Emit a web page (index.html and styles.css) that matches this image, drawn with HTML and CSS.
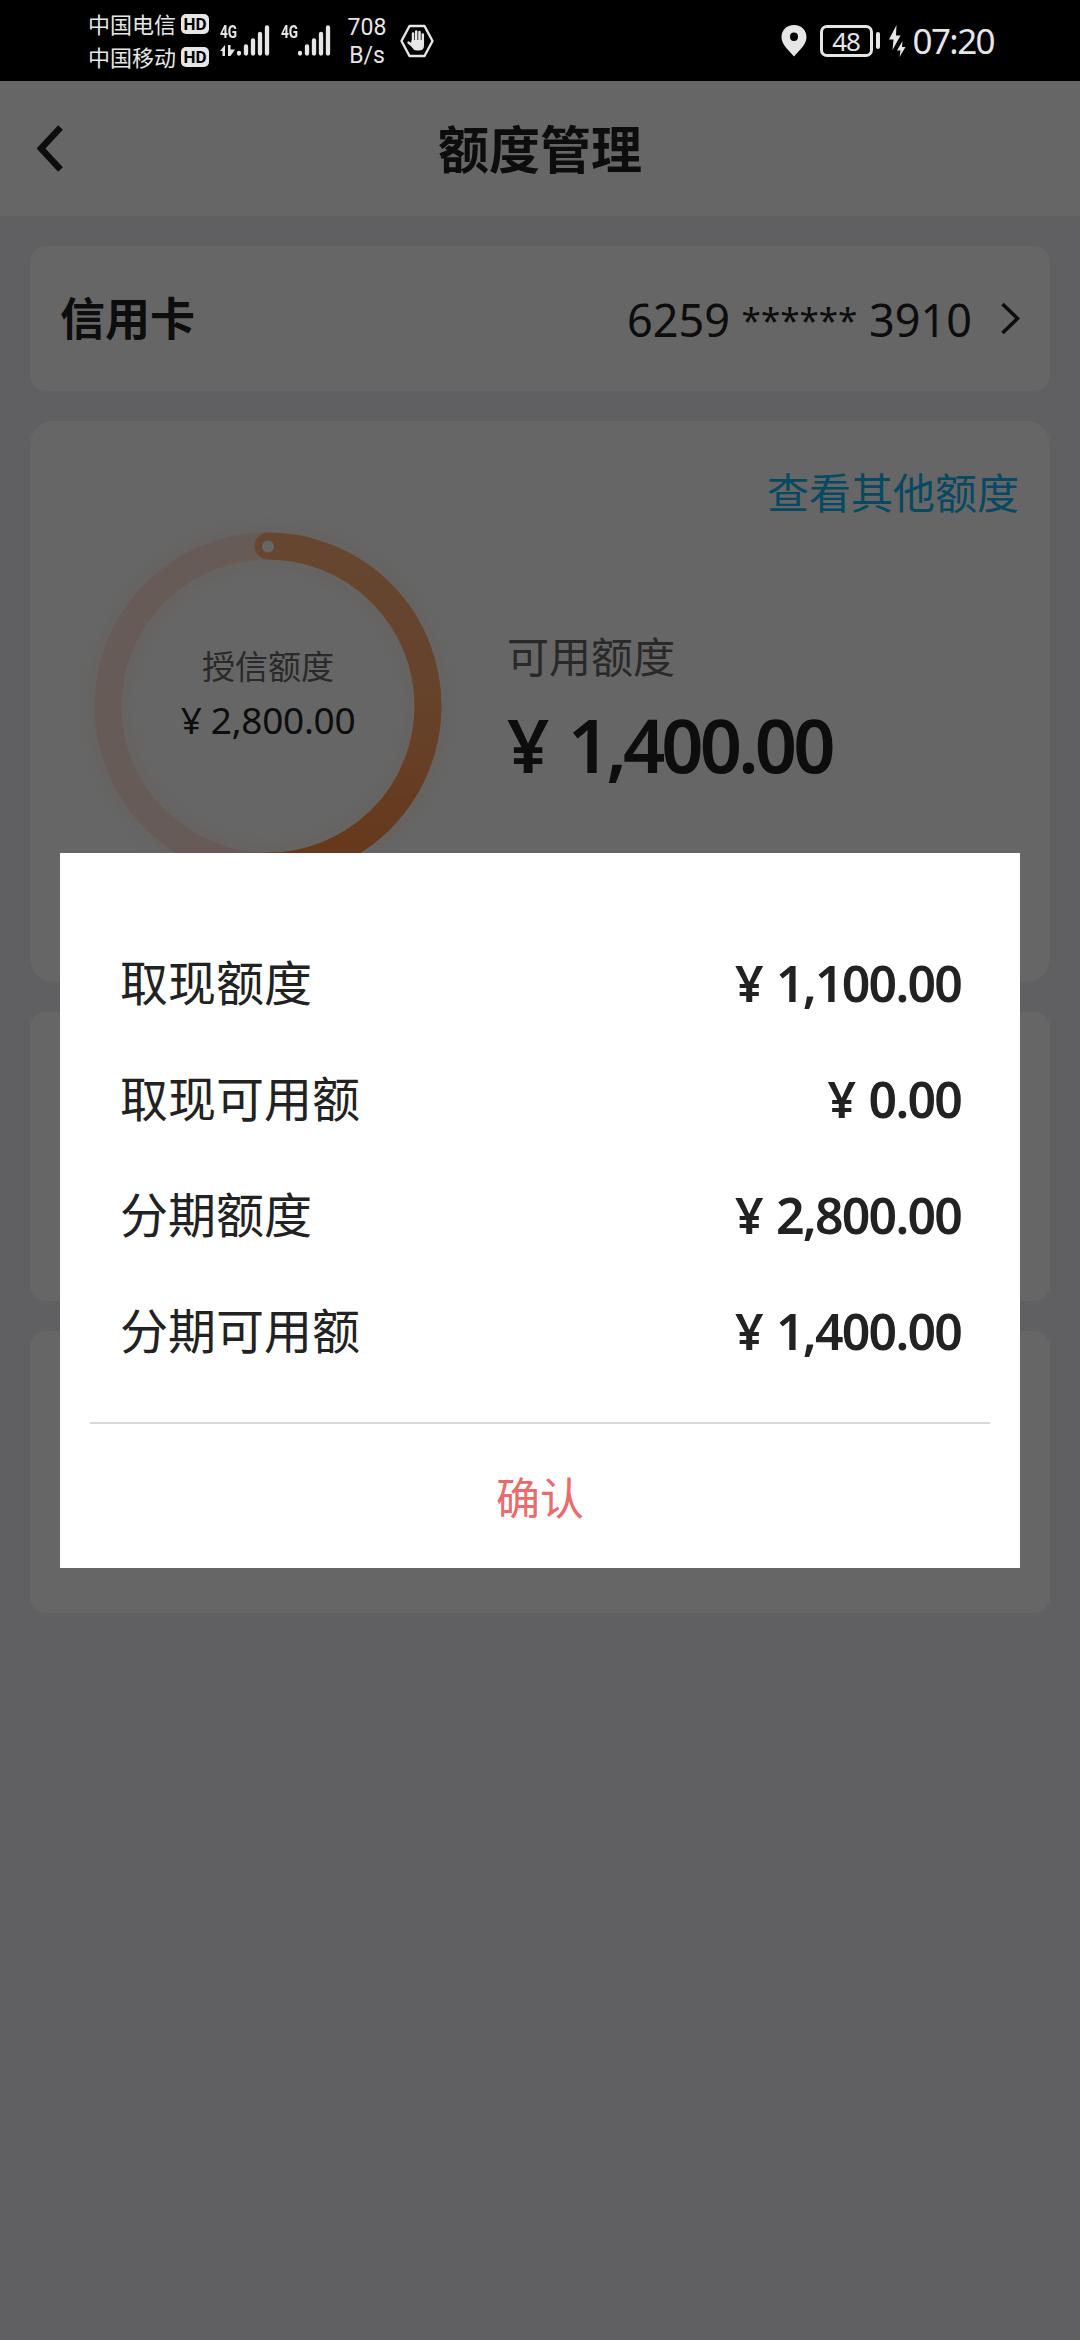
FILE: index.html
```html
<!DOCTYPE html>
<html lang="zh-CN">
<head>
<meta charset="utf-8">
<title>额度管理</title>
<link rel="stylesheet" href="styles.css">
</head>
<body>
<div class="screen">
  <header class="status">
    <div class="carriers">
      <div class="carrier">中国电信<span class="hd">HD</span></div>
      <div class="carrier">中国移动<span class="hd">HD</span></div>
    </div>
    <div class="signal">
      <span class="net">4G</span>
      <svg class="bars" width="51" height="32" viewBox="0 0 51 32">
        <g fill="none" stroke="#e6e6e6" stroke-width="4.300" stroke-linecap="round">
          <path d="M19 28.500v-.5M26 28.500v-7M33 28.500v-13M40 28.500v-19.500M47 28.500v-26"/>
        </g>
        <path class="fill" d="M0 26l5-6v11H2.500v-5zM8 20h2.500v4.500H15L10.500 31H8z"/>
      </svg>
    </div>
    <div class="signal second">
      <span class="net">4G</span>
      <svg class="bars" width="51" height="32" viewBox="0 0 51 32">
        <g fill="none" stroke="#e6e6e6" stroke-width="4.300" stroke-linecap="round">
          <path d="M19 28.500v-.5M26 28.500v-7M33 28.500v-13M40 28.500v-19.500M47 28.500v-26"/>
        </g>
      </svg>
    </div>
    <div class="speed"><span>708</span><span>B/s</span></div>
    <svg class="hand" width="34" height="34" viewBox="0 0 34 34">
      <path d="M9.500 2h15L32.500 17l-8 15h-15L1.500 17z" fill="none" stroke="#e6e6e6" stroke-width="2.400" stroke-linejoin="round"/>
      <path d="M13 18V9.500M16.200 18V7.500M19.500 18V8M22.800 18v-7.500M8.500 18.500l5 4" fill="none" stroke="#e6e6e6" stroke-width="2.500" stroke-linecap="round"/>
      <path class="fill" d="M11.800 16h12.200v5.500q0 5-5 5h-2.500q-2.500 0-4-2.500l-2-3.500z"/>
    </svg>
    <div class="status-right">
      <svg width="26" height="32" viewBox="0 0 26 32">
        <path class="fill" fill-rule="evenodd" d="M13 0C5.500 0 .5 5.500.5 12 .5 20 8 25.500 13 31.500 18 25.500 25.500 20 25.500 12 25.500 5.500 20.500 0 13 0zm0 7.500a4 4.200 0 1 1 0 8.400 4 4.200 0 0 1 0-8.400z"/>
      </svg>
      <div class="battery">48</div>
      <span class="nub"></span>
      <svg class="bolt" width="18" height="34" viewBox="0 0 18 34">
        <path class="fill" d="M8.500 1L1 15.500h4.500L4.500 26 12.500 11.500H8zM14.500 17L9 26.500h3.500L11.500 33 17.500 23h-3.500z"/>
      </svg>
      <span class="time">07:20</span>
    </div>
  </header>

  <main class="app">
    <nav class="nav">
      <svg class="back" width="32" height="50" viewBox="0 0 32 50">
        <path d="M28.500 4.500L9 25.500 28.500 46.500" fill="none" stroke="#222" stroke-width="6.500"/>
      </svg>
      <h1>额度管理</h1>
    </nav>
    <section class="card account">
      <strong>信用卡</strong>
      <div class="number">6259 <span class="stars">******</span> 3910</div>
      <svg width="20" height="36" viewBox="0 0 20 36">
        <path d="M2.500 3L17.500 17.500 2.500 32" fill="none" stroke="#222" stroke-width="3.600"/>
      </svg>
    </section>
    <section class="card limits">
      <a class="more">查看其他额度</a>
      <div class="overview">
        <div class="gauge">
          <svg class="ring" width="400" height="400" viewBox="0 0 400 400">
            <defs>
              <linearGradient id="arc" x1="0" y1="0" x2="0" y2="1">
                <stop offset="0" stop-color="#ffaf78"/>
                <stop offset=".5" stop-color="#ffa66c"/>
                <stop offset="1" stop-color="#ff8c42"/>
              </linearGradient>
            </defs>
            <circle class="track" cx="200" cy="200" r="160"/>
            <path d="M200 40a160 160 0 0 1 0 320" fill="none" stroke="url(#arc)" stroke-width="27" stroke-linecap="round"/>
            <circle cx="200" cy="40.500" r="6" fill="#fff"/>
          </svg>
          <div class="gauge-text">
            <span class="gauge-label">授信额度</span>
            <span class="gauge-value">¥ 2,800.00</span>
          </div>
        </div>
        <div class="available">
          <span class="available-label">可用额度</span>
          <span class="available-value">¥ 1,400.00</span>
        </div>
      </div>
    </section>
    <section class="card bill"></section>
    <section class="card services"></section>

    <div class="mask">
      <div class="dialog">
        <dl>
          <div class="row"><dt>取现额度</dt><dd>¥ 1,100.00</dd></div>
          <div class="row"><dt>取现可用额</dt><dd>¥ 0.00</dd></div>
          <div class="row"><dt>分期额度</dt><dd>¥ 2,800.00</dd></div>
          <div class="row"><dt>分期可用额</dt><dd>¥ 1,400.00</dd></div>
        </dl>
        <button class="confirm">确认</button>
      </div>
    </div>
  </main>
</div>
</body>
</html>
```

FILE: styles.css
```css
* { box-sizing: border-box; }
body, h1, dl, dt, dd { margin: 0; }
body {
  font-family: "Noto Sans CJK SC", sans-serif;
  color: #222;
  background: #000;
}
.screen {
  width: 1080px;
  height: 2340px;
  display: flex;
  flex-direction: column;
  overflow: hidden;
}
svg { display: block; flex: none; }
.fill { fill: #e6e6e6; }

/* status bar */
.status {
  flex: none;
  height: 81px;
  padding: 0 86px 0 88px;
  display: flex;
  align-items: center;
  background: #000;
  color: #e6e6e6;
}
.carriers { width: 132px; margin-top: -2px; }
.carrier {
  height: 33px;
  display: flex;
  align-items: center;
  gap: 5px;
  font-size: 22px;
  line-height: 33px;
  white-space: nowrap;
}
.hd {
  width: 28px;
  height: 20px;
  margin-top: 2px;
  border-radius: 5px;
  background: #e6e6e6;
  color: #000;
  font: 700 17px/20px Roboto, sans-serif;
  text-align: center;
}
.signal {
  position: relative;
  width: 51px;
  height: 32px;
}
.second { margin-left: 10px; }
.net {
  position: absolute;
  left: 0;
  top: 0;
  font: 700 18px/14px Roboto, sans-serif;
  transform: scaleX(.76);
  transform-origin: left;
}
.speed {
  width: 44px;
  margin-left: 13px;
  margin-top: 3px;
  display: flex;
  flex-direction: column;
  text-align: center;
  font: 23px/28px Roboto, sans-serif;
}
.hand { margin-left: 11px; }
.status-right {
  margin-left: auto;
  display: flex;
  align-items: center;
}
.battery {
  width: 53px;
  height: 32px;
  margin-left: 13px;
  border: 3px solid #e6e6e6;
  border-radius: 7px;
  font: 26px/26px "Noto Sans", sans-serif;
  letter-spacing: -1px;
  text-align: center;
}
.nub {
  width: 4px;
  height: 17px;
  margin-left: 3px;
  border-radius: 2px;
  background: #e6e6e6;
}
.bolt { margin-left: 8px; }
.time {
  margin-left: 7px;
  font: 35px/40px "Noto Sans", sans-serif;
  letter-spacing: -1.6px;
}

/* page */
.app {
  position: relative;
  flex: 1;
  display: flex;
  flex-direction: column;
  gap: 30px;
  background: #f0f0f4;
}
.nav {
  height: 135px;
  display: flex;
  align-items: center;
  justify-content: center;
  background: #fff;
}
.back {
  position: absolute;
  left: 32px;
  top: 42px;
}
.nav h1 {
  font-size: 51px;
  line-height: 60px;
  margin-top: -4px;
}
.card {
  margin: 0 30px;
  background: #fff;
  border-radius: 16px;
}
.account {
  height: 145px;
  padding: 0 30px;
  display: flex;
  align-items: center;
}
.account strong { font-size: 45px; line-height: 60px; margin-top: -3px; }
.number {
  margin: 3px 28px 0 auto;
  font: 45px/60px "Noto Sans", sans-serif;
  white-space: pre;
}
.stars {
  font-size: 35px;
  line-height: 1;
  vertical-align: 4px;
}
.limits {
  height: 561px;
  border-radius: 24px;
  padding-top: 40px;
}
.more {
  display: block;
  padding-right: 31px;
  text-align: right;
  color: #12b4f5;
  font-size: 42px;
  line-height: 60px;
}
.overview { display: flex; margin-top: -15px; }
.gauge {
  position: relative;
  width: 400px;
  height: 400px;
  margin-left: 38px;
}
.ring { filter: drop-shadow(0 0 12px rgba(255, 150, 80, .15)); }
.track {
  fill: none;
  stroke: #ffe4da;
  stroke-width: 27;
}
.gauge-text {
  position: absolute;
  inset: 134px 0 auto;
  display: flex;
  flex-direction: column;
  align-items: center;
}
.gauge-label { font-size: 33px; line-height: 50px; color: #666; }
.gauge-value {
  font: 37px/58px "Noto Sans", sans-serif;
  letter-spacing: -.3px;
  margin-top: 1px;
}
.available {
  display: flex;
  flex-direction: column;
  padding-top: 119px;
  margin-left: 39px;
}
.available-label { font-size: 42px; line-height: 60px; color: #666; }
.available-value {
  font: 600 74px/104px "Noto Sans", sans-serif;
  letter-spacing: -3.9px;
  word-spacing: 7px;
  margin-top: 8px;
}
.bill { height: 289px; }
.services { height: 282px; }

/* dialog */
.mask {
  position: absolute;
  inset: 0;
  padding-top: 772px;
  background: rgba(0, 0, 0, .6);
}
.dialog {
  height: 715px;
  margin: 0 60px;
  padding: 70px 30px 0;
  background: #fff;
}
.dialog dl {
  padding: 0 30px 35px;
  border-bottom: 2px solid #d8dada;
}
.row {
  height: 116px;
  display: flex;
  align-items: center;
  justify-content: space-between;
}
.row dt { font-size: 48px; line-height: 60px; margin-top: -2px; }
.row dd {
  font: 600 50px/60px "Noto Sans", sans-serif;
  letter-spacing: -1.8px;
  word-spacing: 3px;
  margin: 3px -1px 0 0;
}
.confirm {
  display: block;
  width: 100%;
  height: 144px;
  padding: 0;
  border: 0;
  background: none;
  color: #ec6a6a;
  font: 44px/60px "Noto Sans CJK SC", sans-serif;
}
```
